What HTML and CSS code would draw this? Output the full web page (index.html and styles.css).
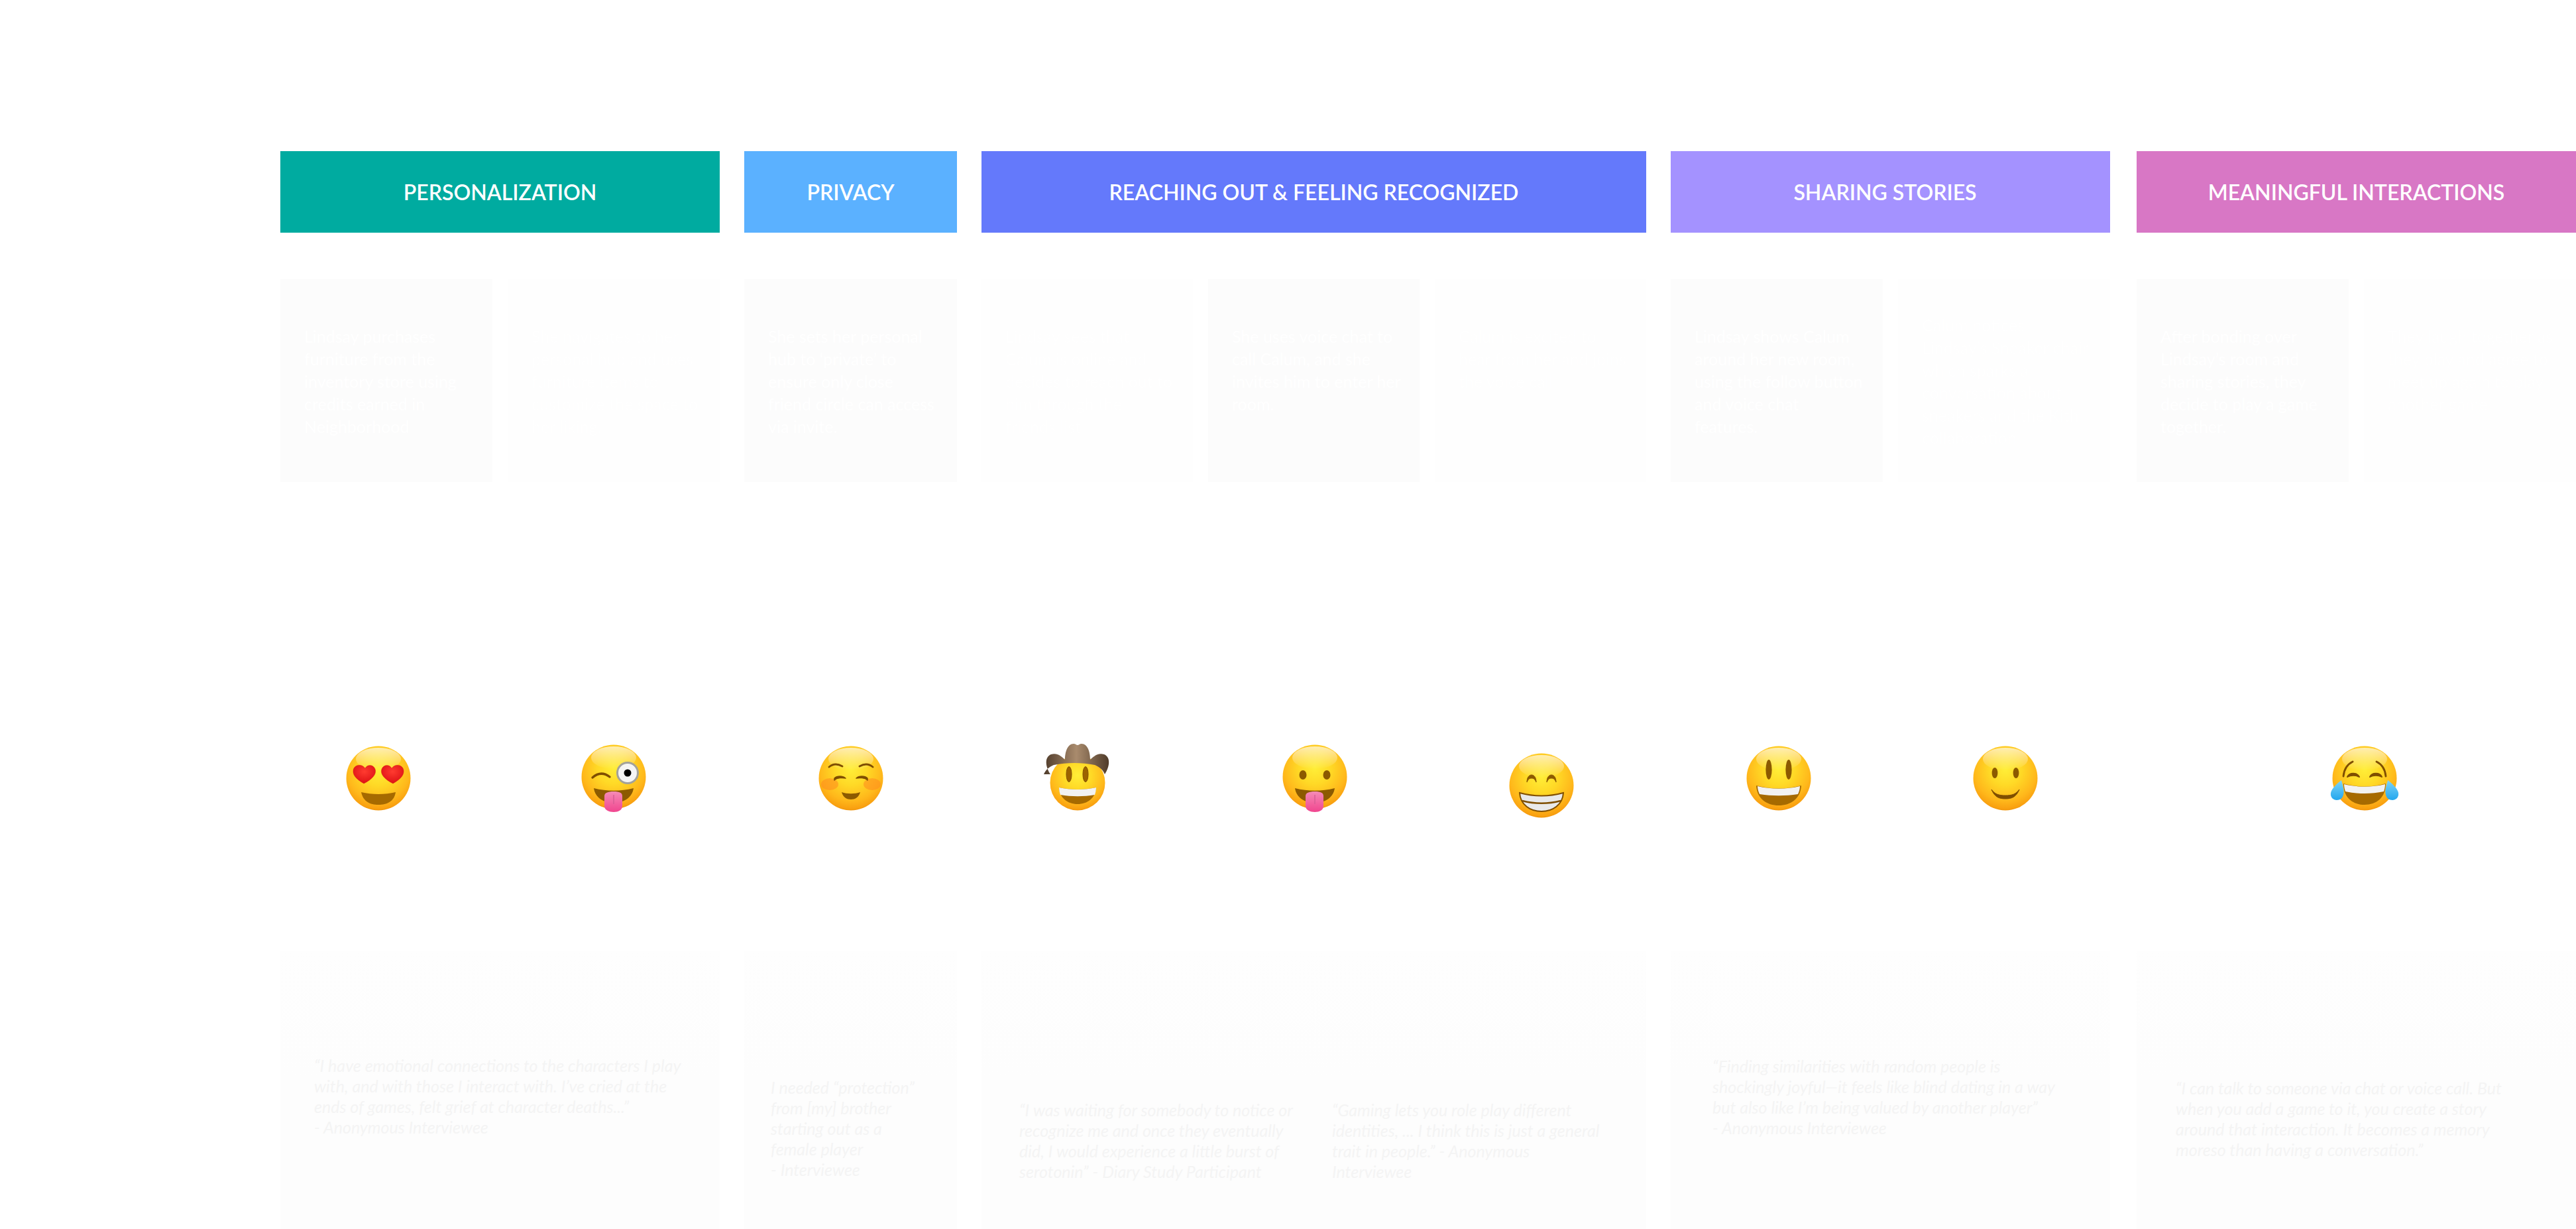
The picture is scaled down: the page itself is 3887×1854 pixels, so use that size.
FILE: index.html
```html
<!DOCTYPE html>
<html lang="en">
<head>
<meta charset="utf-8">
<title>Journey map</title>
<link rel="stylesheet" href="styles.css">
</head>
<body>
<svg class="defs" width="0" height="0" aria-hidden="true">
  <defs>
    <radialGradient id="face" cx="0.5" cy="0.36" r="0.66">
      <stop offset="0" stop-color="#ffee38"/>
      <stop offset="0.38" stop-color="#ffd926"/>
      <stop offset="0.74" stop-color="#ffb81b"/>
      <stop offset="0.93" stop-color="#f9a010"/>
      <stop offset="1" stop-color="#e98a00"/>
    </radialGradient>
    <linearGradient id="shine" x1="0" y1="0" x2="0" y2="1">
      <stop offset="0" stop-color="#fff" stop-opacity="0.65"/>
      <stop offset="1" stop-color="#fff" stop-opacity="0"/>
    </linearGradient>
    <linearGradient id="tongue" x1="0" y1="0" x2="0" y2="1">
      <stop offset="0" stop-color="#f58bb6"/>
      <stop offset="1" stop-color="#f0458f"/>
    </linearGradient>
    <radialGradient id="heart" cx="0.5" cy="0.35" r="0.7">
      <stop offset="0" stop-color="#ff3b30"/>
      <stop offset="1" stop-color="#db0d12"/>
    </radialGradient>
    <linearGradient id="hat" x1="0" y1="0" x2="1" y2="0">
      <stop offset="0" stop-color="#4f3b2a"/>
      <stop offset="0.5" stop-color="#a98b6d"/>
      <stop offset="1" stop-color="#4f3b2a"/>
    </linearGradient>
    <linearGradient id="tear" x1="0" y1="0" x2="0" y2="1">
      <stop offset="0" stop-color="#7fd4f7"/>
      <stop offset="1" stop-color="#22a7ee"/>
    </linearGradient>
    <g id="base">
      <circle cx="49" cy="49" r="48.5" fill="url(#face)"/>
      <ellipse cx="49" cy="20" rx="34" ry="17" fill="url(#shine)"/>
    </g>
  </defs>
</svg>

<main class="map">
  <section class="col col-personal">
    <h2 class="band band-teal">PERSONALIZATION</h2>
    <div class="cards">
      <p class="card card-lit">Lindsay purchases furniture from the inventory store using credits earned in Neighborhood</p>
      <p class="card">She navigates to her personal hub and uses furniture items to customize the space to her liking.</p>
    </div>
    <div class="faces">
      <svg class="emoji heart" viewBox="0 0 98 98">
        <use href="#base"/>
        <path d="M27 57C15 50 10 44 11 37c1-8 12-11 18-3 3-6 12-6 15 1 3 8-5 16-17 22z" fill="url(#heart)" stroke="#c9170f" stroke-opacity=".35"/>
        <path d="M71 57C83 50 88 44 87 37c-1-8-12-11-18-3-3-6-12-6-15 1-3 8 5 16 17 22z" fill="url(#heart)" stroke="#c9170f" stroke-opacity=".35"/>
        <path d="M23 70c16 4 36 4 52 0-2 14-13 19-26 19s-23-5-26-19z" fill="#a66a00"/>
      </svg>
      <svg class="emoji wink" viewBox="0 0 98 98">
        <use href="#base"/>
        <path d="M17 50c8-7 17-8 26-1" fill="none" stroke="#7f4e00" stroke-width="3.4" stroke-linecap="round"/>
        <circle cx="70" cy="43" r="15.5" fill="#f5f5f5" stroke="#a3a29a" stroke-width="3"/>
        <circle cx="70" cy="43" r="5.5" fill="#000"/>
        <path d="M19 66c20 5 40 5 60 0-2 14-14 22-30 22s-28-8-30-22z" fill="#8c5a00"/>
        <path d="M35 78c0-5 5-7 14-7s13 2 13 7v15c0 6-6 9-13 9s-14-3-14-9z" fill="url(#tongue)"/>
        <path d="M49 76v14" stroke="#d85d94" stroke-width="1.5"/>
      </svg>
    </div>
    <div class="quote quote-a">
      <p class="quote-text">“I have emotional connections to the characters I play with, and with those I interact with. I’ve cried at the ends of games, felt grief at character deaths...”<br>- Anonymous Interviewee</p>
    </div>
  </section>

  <section class="col col-privacy">
    <h2 class="band band-sky">PRIVACY</h2>
    <div class="cards">
      <p class="card card-lit">She sets her personal hub to ‘private’ to ensure only close friend circle can access via invite.</p>
    </div>
    <div class="faces">
      <svg class="emoji blush" viewBox="0 0 98 98">
        <use href="#base"/>
        <ellipse cx="17" cy="58" rx="13" ry="9" fill="#ff8a1f" opacity=".55"/>
        <ellipse cx="81" cy="58" rx="13" ry="9" fill="#ff8a1f" opacity=".55"/>
        <path d="M16 32c6-5 13-5 20-1M62 31c7-4 14-4 20 1" fill="none" stroke="#7f4e00" stroke-width="2.8" stroke-linecap="round"/>
        <path d="M24 49c4-4 13-4 17 0-4-1-13-1-17 3zM57 49c4-4 13-4 17 0v3c-4-4-13-4-17-3z" fill="#7f4e00" stroke="#7f4e00" stroke-width="1.5" stroke-linejoin="round"/>
        <path d="M35 70c8 3 20 3 28 0-2 8-8 11-14 11s-12-3-14-11z" fill="#8c5a00"/>
      </svg>
    </div>
    <div class="quote quote-b">
      <p class="quote-text">I needed “protection” from [my] brother starting out as a female player<br>- Interviewee</p>
    </div>
  </section>

  <section class="col col-reach">
    <h2 class="band band-indigo">REACHING OUT &amp; FEELING RECOGNIZED</h2>
    <div class="cards">
      <p class="card">Lindsay sees that Calum is online and decides to reach out to him through the friends list</p>
      <p class="card card-lit">She uses voice chat to call Calum, and she invites him to enter her room.</p>
      <p class="card">Calum is excited to hear from her and joins the voice call</p>
    </div>
    <div class="faces">
      <svg class="emoji cowboy" viewBox="0 0 100 100">
        <circle cx="50" cy="59" r="41.5" fill="url(#face)"/>
        <path d="M9 46C1 34 0 20 10 16c11-3 17 5 21 8 0-12 4-24 13-24 3 0 4 2 6 2s3-2 6-2c9 0 13 12 13 24 4-3 10-11 21-8 10 4 9 18 1 30-3-7-8-11-15-14-20-4-42-4-62 0-7 3-12 7-15 14z" fill="url(#hat)"/>
        <ellipse cx="37" cy="46" rx="4" ry="11.5" fill="#9c6300" stroke="#7f4e00"/>
        <ellipse cx="62" cy="46" rx="4" ry="11.5" fill="#9c6300" stroke="#7f4e00"/>
        <path d="M22 66c18 4 38 4 56 0-1 16-13 25-28 25S23 82 22 66z" fill="#a66a00"/>
        <path d="M22 66c18 4 38 4 56 0 0 4-1 8-2 11-17 3-35 3-52 0-1-3-2-7-2-11z" fill="#f2f2f2"/>
      </svg>
      <svg class="emoji tongue" viewBox="0 0 98 98">
        <use href="#base"/>
        <ellipse cx="31" cy="46" rx="5.5" ry="7" fill="#8c5a00"/>
        <ellipse cx="67" cy="46" rx="5.5" ry="7" fill="#8c5a00"/>
        <path d="M19 66c20 5 40 5 60 0-2 14-14 22-30 22s-28-8-30-22z" fill="#8c5a00"/>
        <path d="M35 78c0-5 5-7 14-7s13 2 13 7v15c0 6-6 9-13 9s-14-3-14-9z" fill="url(#tongue)"/>
        <path d="M49 76v14" stroke="#d85d94" stroke-width="1.5"/>
      </svg>
      <svg class="emoji grin" viewBox="0 0 98 98">
        <use href="#base"/>
        <path d="M27 44c0-7 3-11 7-11s7 4 7 11c-2-5-4-6-7-6s-5 1-7 6zM57 44c0-7 3-11 7-11s7 4 7 11c-2-5-4-6-7-6s-5 1-7 6z" fill="#8c5a00" stroke="#8c5a00" stroke-linejoin="round"/>
        <path d="M16 60c22 6 44 6 66 0-1 18-16 28-33 28S17 78 16 60z" fill="#e9e9e9" stroke="#7f4e00" stroke-width="2"/>
        <path d="M20 72c19 5 39 5 58 0" fill="none" stroke="#7f4e00" stroke-width="2.4"/>
      </svg>
    </div>
    <div class="quote quote-c">
      <p class="quote-text quote-narrow">“I was waiting for somebody to notice or recognize me and once they eventually did, I would experience a little burst of serotonin”  - Diary Study Participant</p>
      <p class="quote-text quote-slim">“Gaming lets you role play different identities, ... I think this is just a general trait in people.” - Anonymous Interviewee</p>
    </div>
  </section>

  <section class="col col-share">
    <h2 class="band band-violet"><span class="band-shift">SHARING STORIES</span></h2>
    <div class="cards">
      <p class="card card-lit">Lindsay shows Calum around her new room, using the follow button and voice chat features.</p>
      <p class="card card-low">Calum notices Lindsay’s Sneaker chair which sparks a conversation about sneakers and the Kith collaboration</p>
    </div>
    <div class="faces">
      <svg class="emoji smiley" viewBox="0 0 98 98">
        <use href="#base"/>
        <ellipse cx="34" cy="36" rx="4.6" ry="15" fill="#8c5a00"/>
        <ellipse cx="64" cy="36" rx="4.6" ry="15" fill="#8c5a00"/>
        <path d="M15 60c23 6 45 6 68 0-1 20-16 30-34 30S16 80 15 60z" fill="#a66a00"/>
        <path d="M17 61c21 5 43 5 64 0 0 3-1 8-3 12-19 3-39 3-58 0-2-4-3-9-3-12z" fill="#f2f2f2"/>
      </svg>
      <svg class="emoji smile" viewBox="0 0 98 98">
        <use href="#base"/>
        <ellipse cx="33" cy="41" rx="4.4" ry="8" fill="#8c5a00"/>
        <ellipse cx="65" cy="41" rx="4.4" ry="8" fill="#8c5a00"/>
        <path d="M28 66c5 7 11 9 21 9s16-2 21-9c-5 12-12 14-21 14s-16-2-21-14z" fill="#7f4e00" stroke="#7f4e00" stroke-linejoin="round"/>
      </svg>
    </div>
    <div class="quote quote-e">
      <p class="quote-text">“Finding similarities with random people is shockingly joyful—it feels like blind dating in a way but also like I’m being valued by another player”<br>- Anonymous Interviewee</p>
    </div>
  </section>

  <section class="col col-meaning">
    <h2 class="band band-pink">MEANINGFUL INTERACTIONS</h2>
    <div class="cards">
      <p class="card card-lit">After bonding over Lindsay’s room and sharing stories, they decide to play a game together.</p>
      <p class="card">They laugh together as they play and agree to meet up again to play another game</p>
    </div>
    <div class="faces">
      <svg class="emoji laugh" viewBox="-6 0 110 98">
        <use href="#base"/>
        <path d="M17 46c1-11 6-18 14-22M81 46c-1-11-6-18-14-22" fill="none" stroke="#7f4e00" stroke-width="2.8" stroke-linecap="round"/>
        <path d="M23 47c3-7 15-7 18 0-5-3-13-3-18 0zM57 47c3-7 15-7 18 0-5-3-13-3-18 0z" fill="#7f4e00" stroke="#7f4e00" stroke-width="2" stroke-linejoin="round"/>
        <path d="M17 57c21 6 43 6 64 0 0 21-14 32-32 32S17 78 17 57z" fill="#a66a00"/>
        <path d="M18 58c20 5 42 5 62 0 0 4-1 8-2 11-19 4-39 4-58 0-1-3-2-7-2-11z" fill="#f2f2f2"/>
        <path d="M14 52c2 8 5 15 3 22-1 5-5 8-10 8s-10-4-9-11c1-6 9-14 16-19z" fill="url(#tear)"/>
        <path d="M84 52c-2 8-5 15-3 22 1 5 5 8 10 8s10-4 9-11c-1-6-9-14-16-19z" fill="url(#tear)"/>
      </svg>
    </div>
    <div class="quote quote-d">
      <p class="quote-text">“I can talk to someone via chat or voice call. But when you add a game to it, you create a story around that interaction. It becomes a memory moreso than having a conversation.”</p>
    </div>
  </section>
</main>
</body>
</html>
```
FILE: styles.css
```css
html, body {
  margin: 0;
  padding: 0;
  background: #fff;
}

body {
  width: 3887px;
  height: 1854px;
  overflow: hidden;
  font-family: "Lato", "Open Sans", sans-serif;
}

.defs {
  display: block;
}

.map {
  display: flex;
  align-items: flex-start;
  padding: 228px 0 0 423px;
  height: 1854px;
  box-sizing: border-box;
}

.col {
  display: flex;
  flex-direction: column;
  height: 1626px;
  flex: none;
}

.col-personal { width: 663px; margin-right: 37px; }
.col-privacy { width: 321px; margin-right: 37px; }
.col-reach { width: 1003px; margin-right: 37px; }
.col-share { width: 663px; margin-right: 40px; }
.col-meaning { width: 663px; }

.band {
  margin: 0;
  height: 123px;
  flex: none;
  display: flex;
  align-items: center;
  justify-content: center;
  color: #fff;
  font-size: 32px;
  font-weight: 600;
  line-height: 1;
}

.band-teal { background: #00aba0; }
.band-sky { background: #5bb1ff; }
.band-indigo { background: #6479fb; }
.band-violet { background: #a492ff; }
.band-pink { background: #d877c5; }

.band-shift {
  padding-right: 16px;
}

.cards {
  display: flex;
  gap: 23px;
  margin-top: 70px;
  height: 306px;
  flex: none;
}

.card {
  flex: 1 1 0;
  min-width: 0;
  margin: 0;
  box-sizing: border-box;
  padding: 69px 28px 0 36px;
  background: #fefefe;
  color: #fff;
  font-size: 25px;
  line-height: 34px;
}

.card-lit {
  background: #fcfcfc;
}

.card-low {
  padding-top: 52px;
}

.faces {
  display: flex;
  align-items: flex-start;
  height: 102px;
  margin-top: 395px;
  flex: none;
}

.emoji {
  width: 98px;
  height: 98px;
  flex: none;
  overflow: visible;
  margin-top: 3px;
}

.heart { margin-left: 99px; }
.wink { margin-left: 257px; margin-top: 1px; }
.blush { margin-left: 112px; }
.cowboy { margin-left: 95px; width: 100px; height: 100px; margin-top: 0; }
.tongue { margin-left: 259px; margin-top: 1px; }
.grin { margin-left: 244px; margin-top: 14px; }
.smiley { margin-left: 114px; }
.smile { margin-left: 244px; }
.laugh { margin-left: 289px; width: 110px; }

.quote {
  flex: 1;
  margin-top: 210px;
  background: linear-gradient(#fefefe, #fdfdfd 45%);
  box-sizing: border-box;
  display: flex;
  gap: 40px;
  color: #f4f4f4;
}

.quote-text {
  margin: 0;
  font-size: 25px;
  font-style: italic;
  line-height: 31px;
}

.quote-a { padding: 158px 42px 0 51px; }
.quote-b { padding: 191px 56px 0 40px; }
.quote-c { padding: 225px 30px 0 57px; }
.quote-d { padding: 192px 104px 0 59px; }
.quote-e { padding: 159px 75px 0 63px; }

.quote-narrow {
  flex: 0 0 432px;
}

.quote-slim {
  flex: 0 0 412px;
}
```
